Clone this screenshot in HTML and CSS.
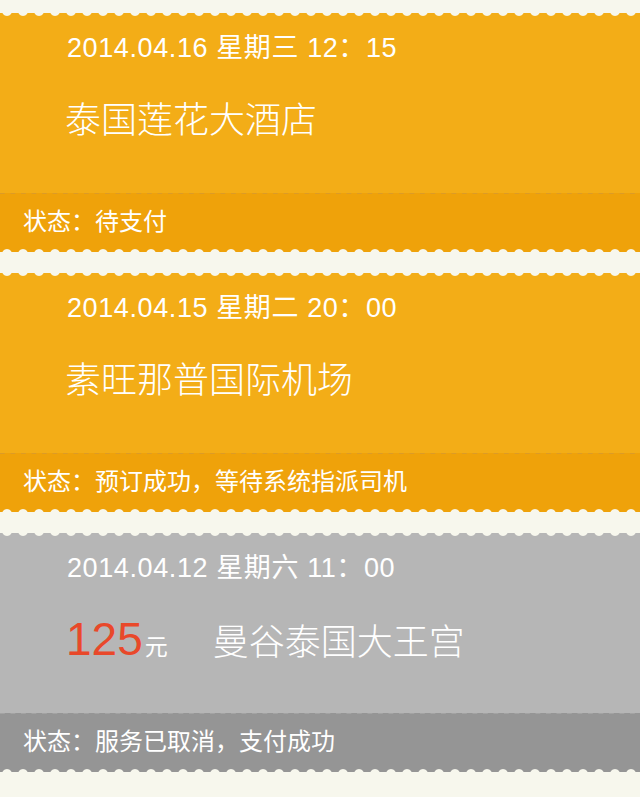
FILE: index.html
```html
<!DOCTYPE html>
<html lang="zh-CN">
<head>
<meta charset="utf-8">
<title>订单列表</title>
<link rel="stylesheet" href="styles.css">
</head>
<body>
<div class="list">
  <div class="card card-orange">
    <div class="card-main">
      <div class="date">2014.04.16 星期三 12：15</div>
      <div class="place">泰国莲花大酒店</div>
    </div>
    <div class="status">状态：待支付</div>
  </div>
  <div class="card card-orange">
    <div class="card-main">
      <div class="date">2014.04.15 星期二 20：00</div>
      <div class="place">素旺那普国际机场</div>
    </div>
    <div class="status">状态：预订成功，等待系统指派司机</div>
  </div>
  <div class="card card-grey">
    <div class="card-main">
      <div class="date">2014.04.12 星期六 11：00</div>
      <div class="place-row">
        <span class="price">125</span><span class="unit">元</span>
        <span class="place place-inline">曼谷泰国大王宫</span>
      </div>
    </div>
    <div class="status">状态：服务已取消，支付成功</div>
  </div>
</div>
</body>
</html>
```

FILE: styles.css
```css
html, body {
  margin: 0;
  padding: 0;
}
body {
  background: #f7f7ed;
  font-family: "Liberation Sans", "Noto Sans CJK SC", sans-serif;
  color: #ffffff;
  width: 640px;
  height: 797px;
  overflow: hidden;
}
.list {
  padding-top: 13px;
  display: flex;
  flex-direction: column;
  gap: 21px;
}
.card {
  position: relative;
  height: 239px;
  display: flex;
  flex-direction: column;
}
.card::before,
.card::after {
  content: "";
  position: absolute;
  left: 0;
  right: 0;
  height: 4px;
  background-repeat: repeat-x;
  background-size: 16px 4px;
}
.card::before {
  top: 0;
  background-image: radial-gradient(circle at 7px -2px, #f7f7ed 4.4px, rgba(247,247,237,0) 5.4px);
}
.card::after {
  bottom: 0;
  background-image: radial-gradient(circle at 7px 6px, #f7f7ed 4.4px, rgba(247,247,237,0) 5.4px);
}
.card-main {
  height: 180px;
  box-sizing: border-box;
  padding-top: 20px;
}
.card-orange .card-main { background: #f3ad17; }
.card-grey .card-main { background: #b6b6b6; }

.date {
  font-size: 27px;
  line-height: 31px;
  padding-left: 67px;
  letter-spacing: 0.6px;
}
.place {
  font-size: 36px;
  line-height: 40px;
  margin-top: 37px;
  padding-left: 65px;
  font-weight: 300;
}
.place-row {
  display: flex;
  align-items: baseline;
  margin-top: 33px;
  padding-left: 66px;
  height: 44px;
}
.price {
  font-size: 46px;
  line-height: 44px;
  color: #e9482a;
}
.unit {
  font-size: 23px;
  margin-left: 2px;
}
.place-inline {
  margin-top: 0;
  padding-left: 0;
  margin-left: 45px;
}
.status {
  height: 59px;
  box-sizing: border-box;
  font-size: 24px;
  line-height: 58px;
  padding-left: 23px;
  background-repeat: repeat-x;
  background-position: 0 0;
  background-size: 10.5px 1px;
}
.card-orange .status {
  background-color: #efa20a;
  background-image: linear-gradient(to right, #dc9b26 5px, rgba(0,0,0,0) 5px);
}
.card-grey .status {
  background-color: #959595;
  background-image: linear-gradient(to right, #a3a3a3 5px, rgba(0,0,0,0) 5px);
}
```
